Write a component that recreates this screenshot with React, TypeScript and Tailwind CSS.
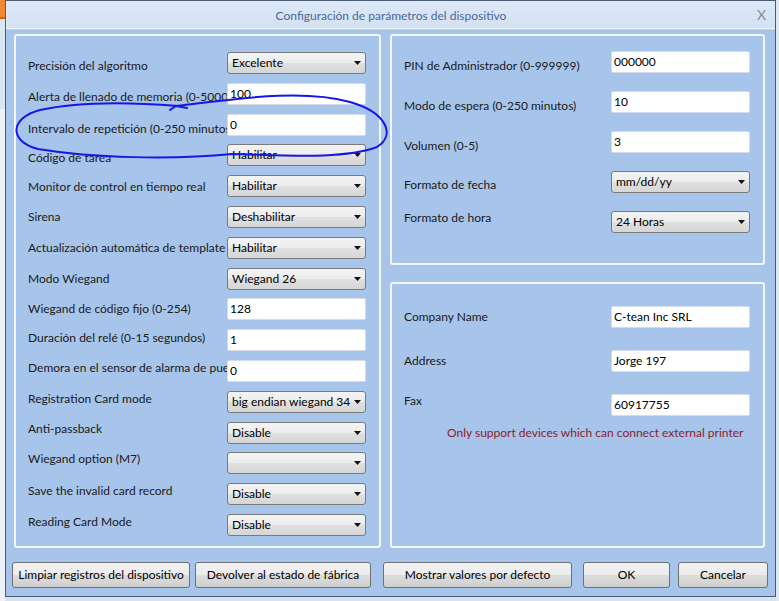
type Row = {
  label: string
  kind: 'select' | 'input'
  value: string
  shift: string
}

const leftRows: Row[] = [
  { label: 'Precisión del algoritmo', kind: 'select', value: 'Excelente', shift: 'translate-y-[3px]' },
  { label: 'Alerta de llenado de memoria (0-5000)', kind: 'input', value: '100', shift: 'translate-y-[3px]' },
  { label: 'Intervalo de repetición (0-250 minutos)', kind: 'input', value: '0', shift: 'translate-y-[4px]' },
  { label: 'Código de tarea', kind: 'select', value: 'Habilitar', shift: 'translate-y-[3px]' },
  { label: 'Monitor de control en tiempo real', kind: 'select', value: 'Habilitar', shift: 'translate-y-[1px]' },
  { label: 'Sirena', kind: 'select', value: 'Deshabilitar', shift: 'translate-y-0' },
  { label: 'Actualización automática de template', kind: 'select', value: 'Habilitar', shift: 'translate-y-0' },
  { label: 'Modo Wiegand', kind: 'select', value: 'Wiegand 26', shift: 'translate-y-0' },
  { label: 'Wiegand de código fijo (0-254)', kind: 'input', value: '128', shift: 'translate-y-0' },
  { label: 'Duración del relé (0-15 segundos)', kind: 'input', value: '1', shift: '-translate-y-[2px]' },
  { label: 'Demora en el sensor de alarma de puerta', kind: 'input', value: '0', shift: '-translate-y-[3px]' },
  { label: 'Registration Card mode', kind: 'select', value: 'big endian wiegand 34', shift: '-translate-y-[3px]' },
  { label: 'Anti-passback', kind: 'select', value: 'Disable', shift: '-translate-y-[4px]' },
  { label: 'Wiegand option (M7)', kind: 'select', value: '', shift: '-translate-y-[4px]' },
  { label: 'Save the invalid card record', kind: 'select', value: 'Disable', shift: '-translate-y-[3px]' },
  { label: 'Reading Card Mode', kind: 'select', value: 'Disable', shift: '-translate-y-[3px]' },
]

const topRight: Row[] = [
  { label: 'PIN de Administrador (0-999999)', kind: 'input', value: '000000', shift: 'translate-y-[4px]' },
  { label: 'Modo de espera (0-250 minutos)', kind: 'input', value: '10', shift: 'translate-y-[4px]' },
  { label: 'Volumen (0-5)', kind: 'input', value: '3', shift: 'translate-y-[4px]' },
  { label: 'Formato de fecha', kind: 'select', value: 'mm/dd/yy', shift: 'translate-y-[3px]' },
  { label: 'Formato de hora', kind: 'select', value: '24 Horas', shift: '-translate-y-[4px]' },
]

const bottomRight: Row[] = [
  { label: 'Company Name', kind: 'input', value: 'C-tean Inc SRL', shift: 'translate-y-0' },
  { label: 'Address', kind: 'input', value: 'Jorge 197', shift: 'translate-y-0' },
  { label: 'Fax', kind: 'input', value: '60917755', shift: '-translate-y-[4px]' },
]

function Field({ row }: { row: Row }) {
  if (row.kind === 'input') {
    return (
      <div className="w-[139px] h-[22px] bg-white border border-[#d3dce8] rounded-[2px] pl-[2px] flex items-center text-black overflow-hidden whitespace-nowrap">
        {row.value}
      </div>
    )
  }
  return (
    <div className="w-[139px] h-[22px] border border-[#7a7a7a] rounded-[3px] bg-[linear-gradient(to_bottom,#f4f4f4_0%,#ececec_50%,#e0e0e0_51%,#d6d6d6_100%)] pl-[4px] pr-[4px] flex items-center text-black">
      <span className="flex-1 overflow-hidden whitespace-nowrap">{row.value}</span>
      <svg width="7" height="4" viewBox="0 0 7 4" className="shrink-0 ml-[2px]">
        <path d="M0 0h7L3.5 4z" fill="#111" />
      </svg>
    </div>
  )
}

function Line({ row, labelW }: { row: Row; labelW: string }) {
  return (
    <div className="flex items-center h-[22px]">
      <div className={`${labelW} ${row.shift} pr-[1px] overflow-hidden whitespace-nowrap text-[#1a1a1a]`}>{row.label}</div>
      <Field row={row} />
    </div>
  )
}

function Btn({ text, w }: { text: string; w: string }) {
  return (
    <div className={`${w} h-[26px] border border-[#707070] rounded-[3px] bg-[linear-gradient(to_bottom,#f2f2f2_0%,#ebebeb_50%,#dddddd_51%,#cfcfcf_100%)] flex items-center justify-center text-black whitespace-nowrap`}>
      {text}
    </div>
  )
}

export default function App() {
  return (
    <div className="relative w-[779px] h-[601px] overflow-hidden flex bg-[#d6e2f0] text-[12px] leading-[16px] font-['Lato','Noto_Sans',sans-serif]">
      {/* window behind the dialog */}
      <div className="w-[5px] flex flex-col">
        <div className="h-[17px] bg-[#f08a32]" />
        <div className="h-[2px] bg-[#c9641e]" />
        <div className="h-[90px] bg-[#dbe6f3]" />
        <div className="flex-1 bg-[#eef2f7]" />
      </div>

      <div className="w-[771px] h-[597px] border border-[#4b5b72] flex flex-col bg-[#a7c4ea]">
        {/* title bar */}
        <div className="h-[27px] grid grid-cols-[1fr_auto_1fr] items-center bg-[linear-gradient(to_bottom,#dde8f7,#d2e1f4)] border-l border-[#e6eefa]">
          <div />
          <div className="text-[#4a6897] translate-y-[1px]">Configuración de parámetros del dispositivo</div>
          <div className="justify-self-end pr-[9px] text-[#8a8a8a] text-[14px]">X</div>
        </div>
        <div className="h-[1px] bg-[#eef4fc]" />
        <div className="h-[1px] bg-[#bcd2ee]" />

        <div className="flex pt-[4px] pl-[8px]">
          {/* left group */}
          <div className="w-[367px] h-[514px] border-2 border-[#f3f7fd] rounded-[3px] pl-[12px] pt-[16px] flex flex-col gap-y-[8.8px]">
            {leftRows.map((r) => (
              <Line key={r.label} row={r} labelW="w-[199px]" />
            ))}
          </div>

          <div className="ml-[9px] flex flex-col gap-[17px]">
            <div className="w-[375px] h-[231px] border-2 border-[#f3f7fd] rounded-[3px] pl-[12px] pt-[15px] flex flex-col gap-[18px]">
              {topRight.map((r) => (
                <Line key={r.label} row={r} labelW="w-[207px]" />
              ))}
            </div>
            <div className="w-[375px] h-[266px] border-2 border-[#f3f7fd] rounded-[3px] pl-[12px] pt-[22px] flex flex-col">
              <div className="flex flex-col gap-[22px]">
                {bottomRight.map((r) => (
                  <Line key={r.label} row={r} labelW="w-[207px]" />
                ))}
              </div>
              <div className="mt-[9px] pl-[43px] text-[#8c1d2c] whitespace-nowrap">
                Only support devices which can connect external printer
              </div>
            </div>
          </div>
        </div>

        {/* buttons */}
        <div className="flex mt-[14px] pl-[6px]">
          <Btn text="Limpiar registros del dispositivo" w="w-[178px]" />
          <div className="ml-[5px]">
            <Btn text="Devolver al estado de fábrica" w="w-[176px]" />
          </div>
          <div className="ml-[12px]">
            <Btn text="Mostrar valores por defecto" w="w-[189px]" />
          </div>
          <div className="ml-[11px]">
            <Btn text="OK" w="w-[87px]" />
          </div>
          <div className="ml-[8px]">
            <Btn text="Cancelar" w="w-[90px]" />
          </div>
        </div>
      </div>

      <div className="flex-1 bg-[#dfe8f3]" />

      {/* hand-drawn annotation */}
      <svg className="absolute left-0 top-0 pointer-events-none" width="779" height="601" viewBox="0 0 779 601">
        <path
          d="M176 106 C230 100 300 88 350 102 C385 112 397 134 377 147 C342 160 282 155 232 154 C172 160 92 158 38 149 C8 141 10 118 40 110 C80 101 130 102 178 106 M170 110 L176 106 L187 108"
          fill="none"
          stroke="#1616e6"
          strokeWidth="2"
          strokeLinecap="round"
          strokeLinejoin="round"
        />
      </svg>
    </div>
  )
}
